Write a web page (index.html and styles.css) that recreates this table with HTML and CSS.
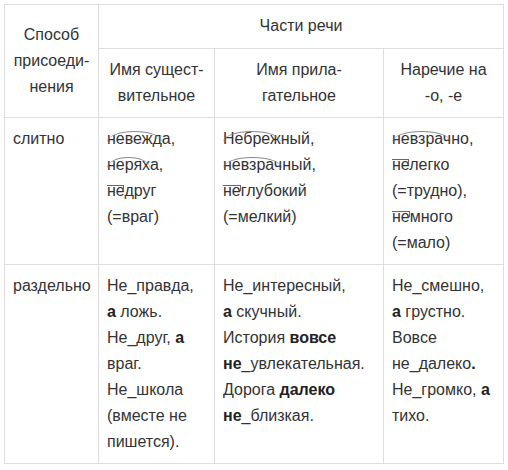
FILE: index.html
```html
<!DOCTYPE html>
<html lang="ru">
<head>
<meta charset="utf-8">
<link rel="stylesheet" href="styles.css">
</head>
<body>
<table class="grid">
  <colgroup>
    <col class="c1"><col class="c2"><col class="c3"><col class="c4">
  </colgroup>
  <thead>
    <tr>
      <th rowspan="2" class="head">Способ<br>присоеди-<br>нения</th>
      <th colspan="3" class="head top">Части речи</th>
    </tr>
    <tr>
      <th class="head">Имя сущест-<br>вительное</th>
      <th class="head">Имя прила-<br>гательное</th>
      <th class="head">Наречие на<br>-о, -е</th>
    </tr>
  </thead>
  <tbody>
    <tr class="r3">
      <td>слитно</td>
      <td><span class="root">невежд</span>а,<br><span class="root">нерях</span>а,<br><span class="prefix">не</span>друг<br>(=враг)</td>
      <td><span class="root">Небреж</span>ный,<br><span class="root">невзрач</span>ный,<br><span class="prefix">не</span>глубокий<br>(=мелкий)</td>
      <td><span class="root">невзрач</span>но,<br><span class="prefix">не</span>легко<br>(=трудно),<br><span class="prefix">не</span>много<br>(=мало)</td>
    </tr>
    <tr>
      <td>раздельно</td>
      <td>Не_правда,<br><b>а</b> ложь.<br>Не_друг, <b>а</b> враг.<br>Не_школа (вместе не пишется).</td>
      <td>Не_интересный,<br><b>а</b> скучный.<br>История <b>вовсе не</b>_увлекательная.<br>Дорога <b>далеко не</b>_близкая.</td>
      <td>Не_смешно,<br><b>а</b> грустно.<br>Вовсе не_далеко<b>.</b><br>Не_громко, <b>а</b> тихо.</td>
    </tr>
  </tbody>
</table>
</body>
</html>
```

FILE: styles.css
```css
html, body {
  background: #ffffff;
}
body {
  margin: 4px;
  font-family: "Liberation Sans", Arial, sans-serif;
  font-size: 16px;
  line-height: 26px;
  color: #333333;
}
.grid {
  border-collapse: collapse;
  table-layout: fixed;
  width: 499px;
}
.c1 { width: 94px; }
.c2 { width: 116px; }
.c3 { width: 169px; }
.c4 { width: 120px; }
.grid th,
.grid td {
  border: 1px solid #dddddd;
  padding: 8px 8px;
  text-align: left;
  vertical-align: top;
}
.grid th.head {
  font-weight: normal;
  text-align: center;
  vertical-align: middle;
}
.grid th.top {
  padding: 8px 8px 9px;
}
.grid b {
  font-weight: bold;
  color: #222222;
}
.root,
.prefix {
  position: relative;
}
.root::before {
  content: "";
  position: absolute;
  left: 0;
  right: 0;
  top: 1px;
  height: 10px;
  border-top: 1px solid #888888;
  border-radius: 50% 50% 0 0 / 100% 100% 0 0;
}
.prefix::before {
  content: "";
  position: absolute;
  left: 0;
  right: 0;
  top: 3px;
  height: 5px;
  border-top: 1px solid #666666;
  border-right: 1px solid #666666;
}
```
